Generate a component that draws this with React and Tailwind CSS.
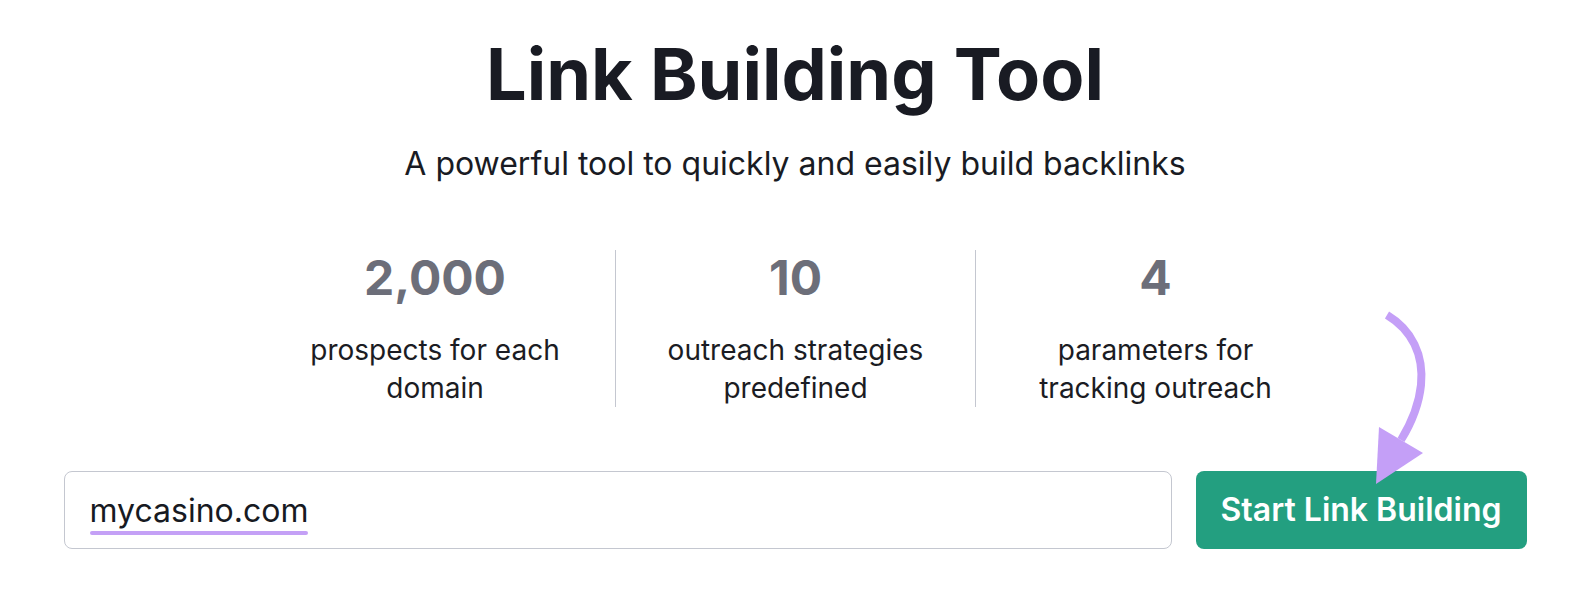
import React from "react";

function Stat({ value, lines, border }) {
  return (
    <div
      className={
        "w-[360px] flex flex-col items-center pt-1 " +
        (border ? "border-l border-[#c4c7d0]" : "")
      }
    >
      <div className="text-[48px] leading-[48px] font-bold text-[#6c6e79]">{value}</div>
      <div className="mt-[29px] text-[28px] leading-[38px] text-[#1b1c23] text-center">
        {lines.map((l, i) => (
          <div key={i}>{l}</div>
        ))}
      </div>
    </div>
  );
}

export default function App() {
  return (
    <div
      className="relative w-[1594px] h-[600px] bg-white overflow-hidden"
      style={{ fontFamily: "Inter, 'Noto Sans', sans-serif" }}
    >
      <div className="flex flex-col items-center pt-[38px] pr-[4px]">
        <h1 className="text-[72px] leading-[72px] font-bold text-[#191b23]">
          Link Building Tool
        </h1>
        <p className="mt-[34px] text-[32px] leading-[40px] text-[#191b23]">
          A powerful tool to quickly and easily build backlinks
        </p>
        <div className="mt-[66px] flex">
          <Stat value="2,000" lines={["prospects for each", "domain"]} />
          <Stat value="10" lines={["outreach strategies", "predefined"]} border />
          <Stat value="4" lines={["parameters for", "tracking outreach"]} border />
        </div>
        <div className="mt-[64px] flex gap-6 w-[1463px]">
          <div className="flex-1 h-[78px] border border-[#c4c7d0] rounded-lg pl-[25px] flex items-center">
            <div className="pt-[6px]">
              <div className="text-[32px] leading-[38px] text-[#171a22]">mycasino.com</div>
              <div className="h-[4px] w-full bg-[#c4a0f6] rounded-full mt-[1px]" />
            </div>
          </div>
          <button className="w-[331px] h-[78px] rounded-lg bg-[#239f80] text-white text-[32px] font-semibold flex items-center justify-center">
            Start Link Building
          </button>
        </div>
      </div>
      <svg
        className="absolute left-0 top-0 pointer-events-none"
        width="1594"
        height="600"
        viewBox="0 0 1594 600"
      >
        <path
          d="M1387 315 C1412 330 1424 355 1421 385 C1419 405 1412 422 1401 440"
          fill="none"
          stroke="#c49ff7"
          strokeWidth="8"
        />
        <polygon points="1379,427 1423,453 1376,484" fill="#c49ff7" />
      </svg>
    </div>
  );
}
